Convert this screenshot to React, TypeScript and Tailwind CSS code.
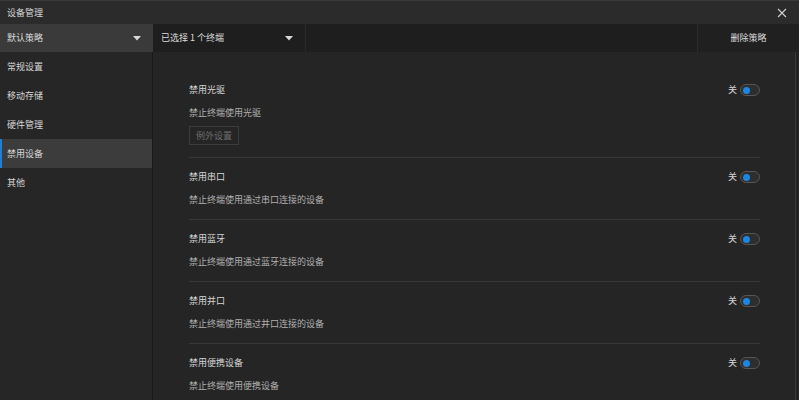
import React from "react";

const sections = [
  { title: "禁用光驱", desc: "禁止终端使用光驱", exception: true },
  { title: "禁用串口", desc: "禁止终端使用通过串口连接的设备" },
  { title: "禁用蓝牙", desc: "禁止终端使用通过蓝牙连接的设备" },
  { title: "禁用并口", desc: "禁止终端使用通过并口连接的设备" },
  { title: "禁用便携设备", desc: "禁止终端使用便携设备" },
];

const menu = ["常规设置", "移动存储", "硬件管理", "禁用设备", "其他"];

function Caret() {
  return (
    <svg width="8" height="5" viewBox="0 0 8 5">
      <path d="M0 0 L8 0 L4 4.5 Z" fill="#d8d8d8" />
    </svg>
  );
}

function Toggle() {
  return (
    <div className="flex items-center gap-[3px]">
      <span className="text-[#d6d6d6]">关</span>
      <div className="w-[20px] h-[12px] rounded-full border border-[#555] bg-[#2e2e2e] flex items-center pl-[2px]">
        <div className="w-[7px] h-[7px] rounded-full bg-[#1e86e0]" />
      </div>
    </div>
  );
}

export default function App() {
  return (
    <div
      className="w-[799px] h-[400px] bg-[#252525] flex flex-col text-[9px] leading-[12px] overflow-hidden"
      style={{ fontFamily: '"Noto Sans CJK SC", "Noto Sans", sans-serif' }}
    >
      {/* title bar */}
      <div className="h-[24px] bg-[#2b2b2b] border-t border-[#3a3a3a] flex items-center justify-between pl-[7px] pr-[12px] text-[#d4d4d4]">
        <span>设备管理</span>
        <svg width="10" height="10" viewBox="0 0 10 10">
          <path d="M1 1 L9 9 M9 1 L1 9" stroke="#d0d0d0" strokeWidth="1.1" />
        </svg>
      </div>

      {/* toolbar */}
      <div className="h-[28px] flex bg-[#1e1e1e] text-[#dcdcdc]">
        <div className="w-[153px] bg-[#3a3a3a] flex items-center justify-between pl-[7px] pr-[12px]">
          <span>默认策略</span>
          <Caret />
        </div>
        <div className="w-[153px] flex items-center justify-between pl-[8px] pr-[12px] border-r border-[#2a2a2a]">
          <span>已选择 1 个终端</span>
          <Caret />
        </div>
        <div className="flex-1" />
        <div className="w-[102px] border-l border-[#2c2c2c] bg-[#202020] flex items-center justify-center">
          删除策略
        </div>
      </div>

      {/* body */}
      <div className="flex-1 flex min-h-0">
        <div className="w-[153px] bg-[#262626] border-r border-[#1a1a1a] flex flex-col text-[#d6d6d6]">
          {menu.map((m) => (
            <div
              key={m}
              className={
                m === "禁用设备"
                  ? "h-[29px] flex items-center pl-[5px] bg-[#3c3c3c] border-l-2 border-[#1e7fd8]"
                  : "h-[29px] flex items-center pl-[7px]"
              }
            >
              {m}
            </div>
          ))}
        </div>

        <div className="flex-1 flex">
          <div className="flex-1 pl-[36px] pr-[35px] pt-[19px]">
            {sections.map((s, i) => (
              <div
                key={s.title}
                className={
                  i < sections.length - 1
                    ? "pt-[13px] pb-[13px] border-b border-[#383838]"
                    : "pt-[13px] pb-[13px]"
                }
              >
                <div className="flex items-center justify-between text-[#d6d6d6]">
                  <span>{s.title}</span>
                  <Toggle />
                </div>
                <div className="mt-[11px] text-[#b0b0b0]">{s.desc}</div>
                {s.exception && (
                  <div className="mt-[7px] mb-[-1px] w-[50px] h-[19px] border border-[#3c3c3c] flex items-center justify-center text-[#6e6e6e]">
                    例外设置
                  </div>
                )}
              </div>
            ))}
          </div>
          <div className="w-[4px] border-l border-[#3a3a3a] bg-[#222]" />
        </div>
      </div>
    </div>
  );
}
